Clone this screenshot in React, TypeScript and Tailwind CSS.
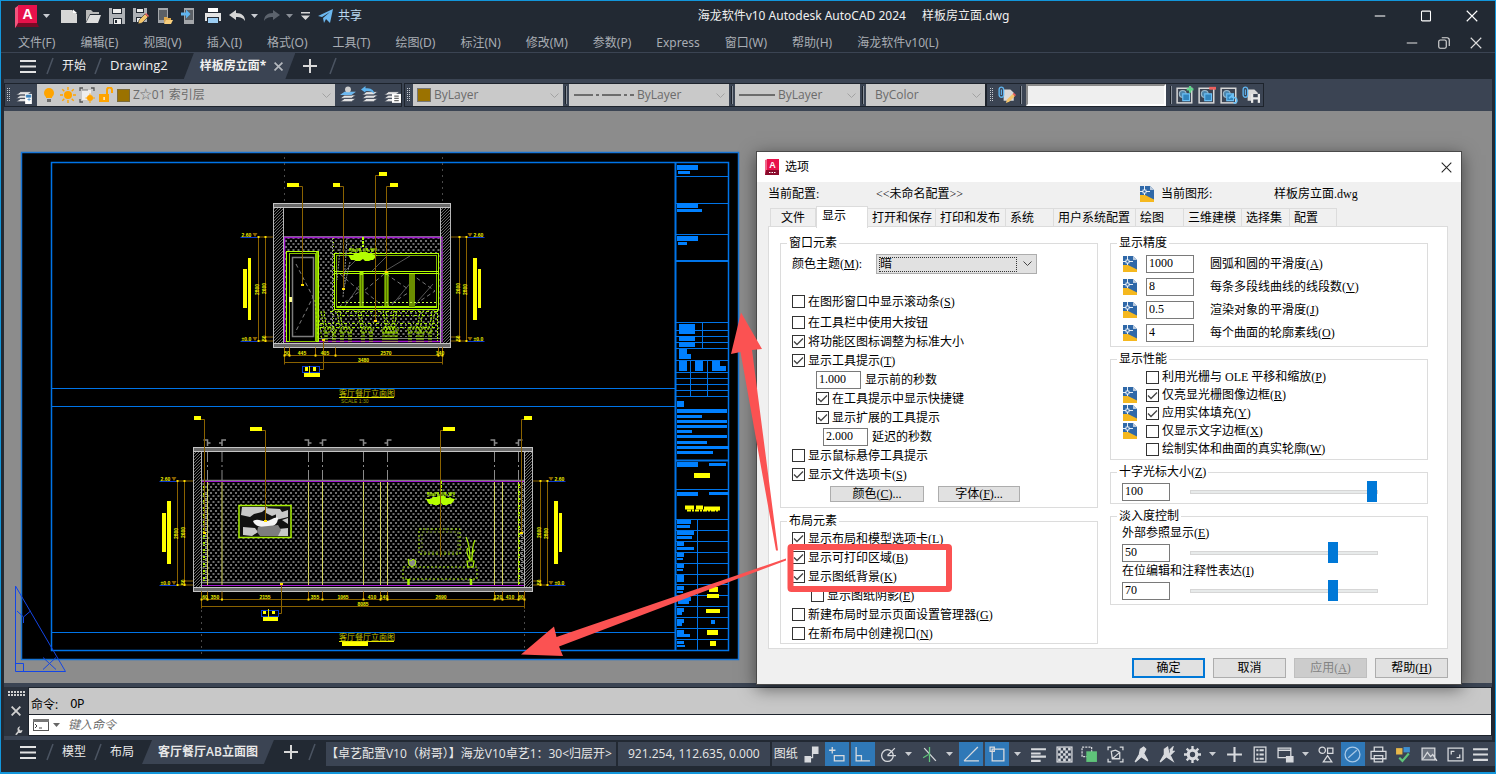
import * as React from 'react';
import { clsx } from 'clsx';

const UI_FONT = "font-['Open_Sans','Noto_Sans_CJK_SC',sans-serif]";
const MENU_FONT = "font-['Noto_Sans','Noto_Sans_CJK_SC',sans-serif]";
const DIALOG_FONT = "font-['Liberation_Serif','Noto_Sans_CJK_SC',serif]";

const MENUS = ['文件(F)', '编辑(E)', '视图(V)', '插入(I)', '格式(O)', '工具(T)', '绘图(D)', '标注(N)', '修改(M)', '参数(P)', 'Express', '窗口(W)', '帮助(H)', '海龙软件v10(L)'];

/* ---------- shared bits ---------- */

function Icon({ size = 16, children, className }: { size?: number; children: React.ReactNode; className?: string }) {
  return (
    <svg width={size} height={size} viewBox="0 0 16 16" fill="none" stroke="none" className={clsx('shrink-0', className)} aria-hidden="true">
      {children}
    </svg>
  );
}

function IconButton({ label, className, children }: { label: string; className?: string; children: React.ReactNode }) {
  return (
    <button type="button" aria-label={label} className={clsx('flex shrink-0 items-center justify-center', className)}>
      {children}
    </button>
  );
}

function Caret({ color = '#c9ccd1' }: { color?: string }) {
  return (
    <svg width="7" height="4" viewBox="0 0 7 4" className="shrink-0" aria-hidden="true">
      <path d="M0 0h7L3.500 4z" fill={color} />
    </svg>
  );
}

function Slash() {
  return (
    <svg width="8" height="18" viewBox="0 0 8 18" className="shrink-0" aria-hidden="true">
      <path d="M7 1L1 17" stroke="#4b5462" strokeWidth="1.500" />
    </svg>
  );
}

function Hamburger() {
  return (
    <svg width="16" height="13" viewBox="0 0 16 13" aria-hidden="true">
      <path d="M0 1h16M0 6.500h16M0 12h16" stroke="#e2e2e2" strokeWidth="2" />
    </svg>
  );
}

function Plus() {
  return (
    <svg width="14" height="14" viewBox="0 0 14 14" aria-hidden="true">
      <path d="M7 0v14M0 7h14" stroke="#d8d8d8" strokeWidth="2" />
    </svg>
  );
}

/* ---------- title bar ---------- */

function AppLogo() {
  return (
    <svg width="24" height="23" viewBox="0 0 24 23" aria-hidden="true">
      <path d="M0 3l4-3v19l-4 4z" fill="#f2557d" />
      <path d="M3 0h19v19H3z" fill="#e8114b" />
      <path d="M3 18h19l2 4H1z" fill="#7a0a26" />
      <text x="12.500" y="14" textAnchor="middle" fontSize="14" fontWeight="700" fill="#fff" className="font-['Liberation_Sans',sans-serif]">A</text>
    </svg>
  );
}

function TitleBar() {
  return (
    <header className="flex h-[30px] items-center justify-between text-xs text-[#f0f0f0]">
      <div className="flex items-center pl-[14px]">
        <IconButton label="应用程序" className="gap-1"><AppLogo /><Caret /></IconButton>
        <div className="ml-[11px] flex items-center gap-2">
          <IconButton label="新建">
            <Icon><path d="M0 2h11l5 4v9H0z" fill="#d6d6d6" /><path d="M12 1.500l4 3.500h-4z" fill="#fff" /></Icon>
          </IconButton>
          <IconButton label="打开">
            <Icon><path d="M1 14V2h5l2 2h6v2H5z" fill="#b9b9b9" /><path d="M5 7h11l-3 8H1z" fill="#dedede" /></Icon>
          </IconButton>
          <IconButton label="保存">
            <Icon><path d="M0 0h16v16H0z" fill="#aeb1b6" /><path d="M3 0h10v6H3zM4 10h9v6H4z" fill="#222933" /><path d="M4 1h8v4H4zM5 11h7v5H5z" fill="#eee" /><path d="M6 12h2v3H6z" fill="#222933" /></Icon>
          </IconButton>
          <IconButton label="另存为">
            <Icon><path d="M0 0h14v14H0z" fill="#aeb1b6" /><path d="M3 0h8v5H3zM3 9h6v5H3z" fill="#222933" /><path d="M4 1h6v3H4zM4 10h4v4H4z" fill="#eee" /><path d="M5 16l1-4 6-6 3 3-6 6z" fill="#f5c56b" stroke="#222933" strokeWidth=".6" /><path d="M12 6l1-1 3 3-1 1z" fill="#f0605d" /></Icon>
          </IconButton>
          <IconButton label="从移动设备打开">
            <Icon><path d="M1 0h10v15H1z" fill="#a4a7ab" /><path d="M2 2h8v10H2z" fill="#5b6066" /><path d="M7 15V9h3l1 1h3v2H9z" fill="#e0a94c" /><path d="M9 12h7l-2 4H7z" fill="#f9cf7d" /></Icon>
          </IconButton>
          <IconButton label="保存到移动设备">
            <Icon><path d="M3 0h10v16H3z" fill="#a4a7ab" /><path d="M4 2h8v10H4z" fill="#5b6066" /><path d="M0 4.500h5V1.500l4.500 4.500L5 10.500V7.500H0z" fill="#5fb4ef" /></Icon>
          </IconButton>
          <IconButton label="打印">
            <Icon><path d="M3 0h10v4H3z" fill="#fff" /><path d="M0 5h16v8H0z" fill="#e3e3e3" /><path d="M2 9h12v7H2z" fill="#222933" /><path d="M3 10h10v5H3z" fill="#9ccdf3" /></Icon>
          </IconButton>
          <IconButton label="放弃" className="gap-[6px]">
            <Icon><path d="M0 7l7-5v3c6 0 9 3 9 8-2-3-4-4-9-4v3z" fill="#d6d6d6" /></Icon><Caret />
          </IconButton>
        </div>
        <div className="ml-[6px] flex items-center gap-2">
          <IconButton label="重做" className="gap-[6px]">
            <Icon><path d="M16 7L9 2v3c-6 0-9 3-9 8 2-3 4-4 9-4v3z" fill="#5c636d" /></Icon><Caret color="#8a8f97" />
          </IconButton>
          <IconButton label="自定义快速访问工具栏">
            <svg width="9" height="8" viewBox="0 0 9 8" aria-hidden="true"><path d="M0 0h9v1.500H0zM0 3.500h9L4.500 8z" fill="#d6d6d6" /></svg>
          </IconButton>
          <button type="button" className="flex items-center gap-1 text-[#b9d8f0]">
            <Icon><path d="M0 8L15 1 12 15 8 11 6 15 5 10 12 4 4 9z" fill="#6cb8f0" /></Icon>
            共享
          </button>
        </div>
      </div>
      <h1 className={clsx('flex gap-4 whitespace-nowrap', MENU_FONT)}><span>海龙软件v10 Autodesk AutoCAD 2024</span><span>样板房立面.dwg</span></h1>
      <div className="flex items-center pl-3">
        <IconButton label="最小化" className="h-[30px] w-[46px]"><Icon size={12}><path d="M1 8h14" stroke="#fff" strokeWidth="1.400" /></Icon></IconButton>
        <IconButton label="最大化" className="h-[30px] w-[46px]"><Icon size={12}><rect x="2" y="1.500" width="12" height="13" rx="1" stroke="#fff" strokeWidth="1.400" /></Icon></IconButton>
        <IconButton label="关闭" className="h-[30px] w-[46px]"><Icon size={12}><path d="M1 1l14 14M15 1L1 15" stroke="#fff" strokeWidth="1.500" /></Icon></IconButton>
      </div>
    </header>
  );
}

function MenuBar() {
  return (
    <nav className="flex h-[22px] items-center justify-between border-b border-[#3b4453] pl-[17px] pr-[3px] pt-[2px] text-xs text-[#a9adb4]">
      <div className={clsx('flex gap-[25px] whitespace-nowrap', MENU_FONT)}>
        {MENUS.map(m => <button key={m} type="button">{m}</button>)}
      </div>
      <div className="flex">
        <IconButton label="最小化图形" className="w-8"><Icon size={12}><path d="M1 8h14" stroke="#ddd" strokeWidth="1.400" /></Icon></IconButton>
        <IconButton label="还原图形" className="w-8"><Icon size={12}><rect x="1" y="4" width="10" height="11" rx="2" stroke="#ddd" strokeWidth="1.500" /><path d="M5 1h7a3 3 0 0 1 3 3v8" stroke="#ddd" strokeWidth="1.500" /></Icon></IconButton>
        <IconButton label="关闭图形" className="w-8"><Icon size={12}><path d="M1 1l14 14M15 1L1 15" stroke="#ddd" strokeWidth="1.500" /></Icon></IconButton>
      </div>
    </nav>
  );
}

function FileTabs() {
  return (
    <div className="flex h-[26px] items-center pl-[19px] text-xs text-[#f0f0f0]">
      <IconButton label="文件菜单"><Hamburger /></IconButton>
      <div className="ml-[10px] flex items-center gap-2">
        <Slash />
        <button type="button">开始</button>
        <Slash />
        <button type="button" className="text-[13px]">Drawing2</button>
      </div>
      <div className="ml-4 flex h-[26px] items-center gap-2 bg-[#3b4453] pl-4 pr-3 [clip-path:polygon(10px_0,100%_0,calc(100%-10px)_100%,0_100%)]">
        <button type="button" className="font-bold">样板房立面*</button>
        <IconButton label="关闭选项卡"><Icon size={9}><path d="M1 1l14 14M15 1L1 15" stroke="#b4b8be" strokeWidth="3" /></Icon></IconButton>
      </div>
      <IconButton label="新图形" className="mx-2"><Plus /></IconButton>
      <span className="ml-1"><Slash /></span>
    </div>
  );
}

/* ---------- toolbars ---------- */

function Grip() {
  return (
    <svg width="4" height="14" viewBox="0 0 4 14" className="shrink-0" aria-hidden="true">
      <path d="M.5 0v14M2.500 0v14" stroke="#c5c9cf" strokeDasharray="1 1" />
    </svg>
  );
}

function Divider() {
  return <span className="h-[18px] w-[2px] shrink-0 border-l border-l-[#1d232c] bg-[#8a919b]" />;
}

function ToolSelect({ label, value, width, children }: { label: string; value: string; width: string; children?: React.ReactNode }) {
  return (
    <label className={clsx('flex h-[22px] items-center gap-[3px] bg-[#c9c9c9] px-1 text-[#6b6b6b]', width)}>
      {children}
      <select aria-label={label} className="min-w-0 flex-1 appearance-none bg-transparent text-xs outline-none">
        <option>{value}</option>
      </select>
      <svg width="9" height="5" viewBox="0 0 9 5" fill="none" className="shrink-0" aria-hidden="true"><path d="M.5.5l4 4 4-4" stroke="#a2a2a2" /></svg>
    </label>
  );
}

function LayerStack({ children }: { children?: React.ReactNode }) {
  return (
    <Icon size={18}>
      <path d="M5 11l-4 3h10l4-3zM5 8l-4 3h10l4-3zM5 5L1 8h10l4-3z" fill="#e3e3e3" stroke="#3b4453" strokeWidth=".7" />
      {children}
    </Icon>
  );
}

function Clip() {
  return <><path d="M5 3h6l3 3v7H5z" fill="#d9d9d9" /><rect x="1" y="1" width="4" height="9" rx="2" stroke="#5fb4ef" strokeWidth="1.200" /><path d="M3 3v5" stroke="#5fb4ef" /></>;
}

function RefEdit() {
  return <><rect x="1" y="2" width="13" height="13" stroke="#d9d9d9" strokeWidth="1.300" /><circle cx="6" cy="7" r="3" fill="#4d86ad" stroke="#9db8c9" /><path d="M6 7h6v6H6z" fill="#3184bd" stroke="#6cc0f5" /></>;
}

function Toolbars() {
  return (
    <div className="mx-[3px] flex h-8 items-center bg-[#3b4453]">
      <div className="flex h-6 items-center gap-1 border border-[#1d232c] pl-[2px]">
        <Grip />
        <IconButton label="图层特性">
          <LayerStack><path d="M9 7h6v9H9z" fill="#fff" /><path d="M10 8h4v2h-4zM11 12h3M12.500 10.500v3" fill="#3c83bd" stroke="#3c83bd" strokeWidth=".6" /></LayerStack>
        </IconButton>
        <ToolSelect label="图层" value="Z☆01 索引层" width="w-[298px]">
          <Icon><circle cx="8" cy="6" r="5" fill="#ffa400" /><path d="M5 10h6v1H5z" fill="#ffa400" /><path d="M6 12h4v3H6z" fill="#6d6d6d" /></Icon>
          <Icon><circle cx="8" cy="8" r="4" fill="#ffa400" /><path d="M8 0v3M8 13v3M0 8h3M13 8h3M2.300 2.300l2 2M11.700 11.700l2 2M13.700 2.300l-2 2M2.300 13.700l2-2" stroke="#ffa400" strokeWidth="1.400" /></Icon>
          <Icon><path d="M1 4V1h3M12 1h3v3M1 12v3h3" stroke="#555" strokeWidth="1.300" /><path d="M3 3h9v10H3z" fill="#eee" /><path d="M3 3h6" stroke="#777" /><circle cx="11" cy="11" r="3" fill="#ffa400" /><path d="M11 6.500v2M11 14v2M6.500 11h2M14 11h2" stroke="#ffa400" /></Icon>
          <Icon><path d="M1 7h10v8H1z" fill="#ffa400" /><path d="M9 7V3a2.500 2.500 0 0 1 5 0v3" stroke="#ffa400" strokeWidth="2" /><path d="M5.500 10h1.200v3H5.500z" fill="#fff" /></Icon>
          <span className="size-[13px] shrink-0 border border-[#7a6a3a] bg-[#9b7200]" />
        </ToolSelect>
        <IconButton label="将对象的图层置为当前"><LayerStack><path d="M5 5L1 8h10l4-3z" fill="#6cb8f0" /><circle cx="8" cy="3" r="2.600" fill="#cfcfcf" /></LayerStack></IconButton>
        <IconButton label="上一个图层"><LayerStack><path d="M0 3l4-3v2c5 0 7 1 8 5-2-2-4-3-8-2.500V6z" fill="#5fb4ef" /></LayerStack></IconButton>
        <IconButton label="图层状态管理器"><LayerStack><path d="M8 7h8v8H8z" fill="#fff" /><path d="M10 9h4M10 11h4M10 13h4" stroke="#666" /></LayerStack></IconButton>
      </div>
      <div className="ml-[2px] flex h-6 items-center gap-[2px] border border-[#1d232c] pl-[2px]">
        <Grip />
        <ToolSelect label="对象颜色" value="ByLayer" width="w-[150px]"><span className="size-[14px] shrink-0 border border-[#777] bg-[#9b7200]" /></ToolSelect>
        <Divider />
        <ToolSelect label="线型" value="ByLayer" width="w-[160px]">
          <svg width="61" height="2" className="shrink-0" aria-hidden="true"><path d="M1 1h60" stroke="#111" strokeDasharray="19 3 3 3" /></svg>
        </ToolSelect>
        <Divider />
        <ToolSelect label="线宽" value="ByLayer" width="w-[125px]">
          <svg width="36" height="2" className="shrink-0" aria-hidden="true"><path d="M0 1h36" stroke="#111" /></svg>
        </ToolSelect>
        <Divider />
        <ToolSelect label="打印样式" value="ByColor" width="w-[119px]"><span className="w-[2px]" /></ToolSelect>
      </div>
      <div className="flex h-6 items-center gap-1 border border-[#1d232c] px-[3px]">
        <Grip />
        <IconButton label="在位编辑参照"><Icon size={18}><Clip /><path d="M7 15l1-3 5-5 2 2-5 5z" fill="#f5c56b" /><path d="M13 7l1-1 2 2-1 1z" fill="#f0605d" /></Icon></IconButton>
        <Divider />
        <input aria-label="参照名" className="h-[22px] w-[140px] border-2 border-b-white border-l-[#8a8a8a] border-r-white border-t-[#8a8a8a] bg-[#efefef] px-1 text-xs" />
        <Divider />
        <IconButton label="添加到工作集"><Icon size={18}><RefEdit /><path d="M12.500 0v6M9.500 3h6" stroke="#5fd38a" strokeWidth="2" /></Icon></IconButton>
        <IconButton label="从工作集删除"><Icon size={18}><RefEdit /><path d="M10 2h6" stroke="#f0605d" strokeWidth="2.500" /></Icon></IconButton>
        <IconButton label="关闭参照"><Icon size={18}><RefEdit /><path d="M8 11l3-3v2c3 0 4 1 4 3s-1 2-3 2" stroke="#6cc0f5" strokeWidth="1.500" /></Icon></IconButton>
        <IconButton label="保存参照编辑"><Icon size={18}><Clip /><path d="M8 7h8v8H8z" fill="#e8e8e8" /><path d="M10 7h4v3h-4zM10 12h4v3h-4z" fill="#3b4453" /></Icon></IconButton>
      </div>
    </div>
  );
}

/* ---------- drawing ---------- */

type Box = [number, number, number, number];

const SHEET_LINES = [176, 203, 234, 322, 330, 336, 342, 348, 360, 372, 378, 384, 390, 396, 489, 519, 530, 541, 552, 563, 574, 584, 595, 606, 617, 628, 639];

const SHEET_BLOCKS: Box[] = [
  [677, 165, 21, 5], [678, 171, 12, 3], [677, 203, 21, 5], [677, 209, 25, 3], [677, 236, 21, 5], [678, 242, 9, 3],
  [679, 324, 16, 10], [679, 336, 16, 5], [679, 342, 16, 5], [679, 349, 8, 10], [687, 354, 4, 5],
  [679, 361, 8, 10], [695, 361, 8, 10], [712, 361, 8, 10], [720, 366, 6, 5], [677, 401, 7, 6],
  [677, 409, 50, 4], [677, 415, 25, 3], [677, 420, 50, 3], [677, 425, 50, 3], [677, 430, 15, 3], [677, 435, 50, 3], [677, 441, 30, 3], [677, 446, 52, 3], [677, 451, 36, 3],
  [677, 462, 21, 5], [709, 463, 17, 3], [677, 492, 21, 4], [709, 492, 20, 3],
  [677, 520, 14, 4], [677, 525, 13, 3], [677, 531, 17, 4], [677, 536, 15, 3], [677, 542, 7, 4], [677, 547, 17, 3],
  [677, 553, 7, 4], [677, 558, 6, 2], [677, 564, 7, 4], [677, 569, 6, 2], [677, 575, 7, 7], [677, 586, 7, 4], [677, 591, 6, 2],
  [677, 597, 14, 4], [678, 601, 11, 3], [677, 608, 7, 4], [677, 612, 5, 3], [677, 619, 7, 4], [677, 623, 5, 3],
  [677, 630, 7, 4], [677, 634, 13, 3], [677, 641, 7, 3], [677, 645, 8, 2], [711, 620, 4, 4],
];

const YELLOW_BLOCKS: Box[] = [
  [694, 473, 16, 5], [709, 587, 9, 5], [707, 594, 12, 4], [706, 609, 14, 4], [707, 630, 11, 5], [710, 641, 6, 5],
  [287, 183, 12, 4], [333, 183, 7, 4], [379, 172, 8, 4], [390, 183, 8, 4],
  [243, 269, 4, 39], [248, 258, 3, 62], [473, 258, 4, 62], [478, 269, 3, 39],
  [194, 416, 7, 4], [250, 427, 12, 4], [443, 427, 12, 4], [524, 416, 8, 4],
  [162, 513, 4, 39], [167, 501, 4, 63], [554, 501, 4, 63], [559, 513, 3, 39],
  [304, 373, 16, 4], [305, 367, 3, 4], [313, 367, 3, 4], [263, 617, 15, 4], [263, 611, 3, 3], [272, 611, 3, 3], [342, 642, 26, 4],
];

function Shell({ x, y, right, bottom, wall }: { x: number; y: number; right: number; bottom: number; wall: number }) {
  const w = right - x;
  return (
    <g>
      <g fill="url(#hatch)" stroke="#b5b5b5">
        <rect x={x + 0.5} y={y + 4} width={wall} height={bottom - y - 8} />
        <rect x={right - wall - 0.5} y={y + 4} width={wall} height={bottom - y - 8} />
      </g>
      <g fill="#6a6a6a" stroke="#c4c4c4">
        <rect x={x + 0.5} y={y + 0.5} width={w - 1} height="4" />
        <rect x={x + 0.5} y={bottom - 4.5} width={w - 1} height="4" />
      </g>
    </g>
  );
}

function SideDims({ inner, outer, edge, top, bottom, mirrored }: { inner: number; outer: number; edge: number; top: number; bottom: number; mirrored?: boolean }) {
  const mid = (top + bottom) / 2;
  const mark = mirrored ? outer + 1 : outer - 6;
  const line = mirrored ? outer + 1 : outer - 18;
  const text = mirrored ? outer + 7 : outer - 17;
  return (
    <g>
      <path d={`M${inner} ${top}V${bottom}M${outer} ${top}V${bottom}M${edge} ${top}H${outer}M${edge} ${bottom}H${outer}M${edge} ${bottom - 4}H${inner}`} stroke="#8a6200" fill="none" />
      <path d={`M${line} ${top + 0.5}h17M${line} ${bottom + 0.5}h17`} stroke="#0a3bd0" />
      <path d={`M${mark} ${top - 4}h5l-2.500 4zM${mark} ${bottom - 4}h5l-2.500 4z`} fill="#8a6200" />
      <g fill="#f0f000" fontSize="5" fontWeight="700">
        <text x={text} y={top}>2.60</text>
        <text x={text} y={bottom}>±0.0</text>
        <text transform={`translate(${inner} ${mid + 5}) rotate(-90)`}>2600</text>
        <text transform={`translate(${outer} ${mid + 6}) rotate(-90)`}>2800</text>
        <text transform={`translate(${inner} ${bottom}) rotate(-90)`}>50</text>
      </g>
      <g fill="#ffe000">
        {[inner, outer].map(x => <path key={x} d={`M${x - 1} ${top - 1}h2v2h-2zM${x - 1} ${bottom - 1}h2v2h-2z`} />)}
      </g>
    </g>
  );
}

function BottomDims({ y, ticks, labels, total }: { y: number; ticks: number[]; labels: [number, string][]; total: string }) {
  const first = ticks[0];
  const last = ticks[ticks.length - 1];
  return (
    <g>
      <path d={`M${first} ${y}H${last}M${first} ${y + 7}H${last}M${first} ${y - 8}V${y + 9}M${last} ${y - 8}V${y + 9}`} stroke="#8a6200" />
      {ticks.map(t => <path key={t} d={`M${t} ${y - 8}V${y + 1}`} stroke="#a06a00" />)}
      {ticks.map(t => <rect key={t} x={t - 1} y={y - 1} width="2" height="2" fill="#ffe000" />)}
      <g fill="#f0f000" fontSize="5" fontWeight="700" textAnchor="middle">
        {labels.map(([x, s]) => <text key={x} x={x} y={y - 1}>{s}</text>)}
        <text x={(first + last) / 2} y={y + 6}>{total}</text>
      </g>
    </g>
  );
}

function Chandelier({ x, y }: { x: number; y: number }) {
  return (
    <g transform={`translate(${x} ${y})`} fill="#b4ff00" stroke="#b4ff00">
      <path d="M0-10V0" strokeWidth="2" strokeDasharray="3 1" />
      <path d="M-12 4h24M-13 1v5M-8 2v6M-3 1v6M4 1v7M9 2v5M13 1v5" strokeWidth="1.200" strokeDasharray="3 1" fill="none" />
      <path d="M-14 2h28" strokeDasharray="5 2" />
      <path d="M-15 8h5l2-2h4l2-1h5l2 2h4l5 1-2 3-2 2H8l-2 1H2l-2-2-3 2h-4l-2-1h-3z" stroke="none" />
    </g>
  );
}

function Chair({ x, flip }: { x: number; flip?: boolean }) {
  return (
    <g transform={`translate(${x} 311)${flip ? ' scale(-1 1)' : ''}`} stroke="#a8f000" fill="none" strokeDasharray="2 1">
      <path d="M0 0c1 6 2 12 3 17M3 0c1 6 1 12 3 16h8M3 18h12v3H3zM4 21v10M6 21v10M12 21v10M14 21v10" />
    </g>
  );
}

function UpperElevation() {
  return (
    <g>
      <path d="M284.500 157V203M442.500 157V203" stroke="#4a4a4a" strokeDasharray="2 4" />
      <rect x="285" y="238" width="157" height="99" fill="url(#paper)" />
      <path d="M284 236.500H442M318 338.500H442" stroke="#7d7d7d" />
      <path d="M284 237.500H442V341.500H284.500V237" stroke="#a216d0" fill="none" strokeWidth="1.500" />
      <Shell x={273} y={203} right={451} bottom={348} wall={10} />

      {/* door */}
      <rect x="286.500" y="251.500" width="32" height="90" fill="#000" stroke="#b4ff00" />
      <rect x="289.500" y="253.500" width="26" height="88" stroke="#8ac400" fill="none" />
      <path d="M317 252V341" stroke="#8ac400" strokeWidth="2" />
      <rect x="292.500" y="257.500" width="21" height="79" fill="#000" stroke="#7d7d7d" strokeWidth="1.500" />
      <path d="M296 264L313 297L295 333" stroke="#7d7d7d" strokeDasharray="4 3" fill="none" />
      <rect x="289" y="297" width="3" height="5" fill="#ffff90" />

      {/* window */}
      <rect x="334.500" y="253.500" width="104" height="56" fill="#000" stroke="#b4ff00" />
      <rect x="336.500" y="255.500" width="100" height="52" stroke="#82b800" fill="none" />
      <path d="M345 271l15-15M372 271l15-15M385 271l25-15M345 306l14-20M392 305l20-24M418 301l15-17" stroke="#555" fill="none" />
      <path d="M340 274l20 17-20 15M386 274l25 17-25 16M411 274l24 17-24 16M384 274l-20 17 20 16" stroke="#777" strokeDasharray="4 3" fill="none" />
      <path d="M335 271.500H438M335 273.500H438" stroke="#b4ff00" />
      <path d="M361.500 272V308M386.500 272V308" stroke="#a8f000" strokeWidth="4" />
      <path d="M361.500 275V306M386.500 275V306" stroke="#5a7800" strokeWidth="2" />
      <path d="M337 307H437" stroke="#a8f000" strokeWidth="2" />
      <rect x="409" y="274" width="6" height="33" fill="#6b8e00" />
      <path d="M338 302.500H438" stroke="#c8ff40" strokeDasharray="2 2" />
      <Chandelier x={363} y={247} />

      {/* curtain and table group */}
      <path d="M332.500 238V340M341 240l-4 40M350 262l-6 26M347 238l-4 60" stroke="#8a8a8a" strokeDasharray="2 1" fill="none" />
      <path d="M333.500 238V340M353 245v14" stroke="#a8f000" strokeDasharray="1 3" />
      <path d="M318 312l4 28M315 300l3 40" stroke="#a8f000" strokeDasharray="2 2" />
      <path d="M320 323.500H440M320 327.500H436M330 311.500H438M342 315.500H432" stroke="#a8f000" strokeDasharray="3 2 1 2" />
      <Chair x={321} /><Chair x={337} /><Chair x={358} /><Chair x={383} /><Chair x={397} flip /><Chair x={423} flip /><Chair x={435} flip />
      <path d="M437.500 310V341" stroke="#a8f000" strokeDasharray="2 1" />

      {/* leaders */}
      <path d="M299 186.500H302.500V285M340 186.500H343.500V289M379 175.500H375.500V321M390 186.500H386.500V272M320 369.500H323.500V340" stroke="#8a6200" fill="none" />
      <path d="M301 284h3v2h-3zM342 288h3v2h-3zM374 320h3v2h-3zM385 271h3v2h-3zM322 339h3v2h-3z" fill="#ffe000" />
      <rect x="302.500" y="366.500" width="17" height="6" stroke="#0a3bd0" fill="none" />
      <path d="M309.500 366v8" stroke="#e8e800" />

      <SideDims inner={265.5} outer={258.5} edge={273} top={237} bottom={341} />
      <SideDims inner={459.5} outer={466.5} edge={451} top={237} bottom={341} mirrored />
      <BottomDims y={355.5} ticks={[284.5, 289.5, 315.5, 335.5, 438.5, 442.5]} labels={[[287, '50'], [302, '445'], [325, '405'], [386, '2570'], [440, '140']]} total="3480" />
      <text x="339" y="396" fontSize="8" fill="#c0c000">客厅餐厅立面图</text>
      <path d="M339 397.500H394" stroke="#e8e800" />
      <text x="341" y="403" fontSize="5" fill="#a0a000">SCALE 1:30</text>
    </g>
  );
}

const PILASTERS = [207.5, 222, 308.5, 322.5, 363.5, 380.5, 387.5, 494.5, 502.5, 518.5];
const AXES = [207.5, 222, 308.5, 322.5, 363.5, 387.5, 494.5, 518.5];

function LowerElevation() {
  return (
    <g>
      <path d="M201.500 592V657M524.500 592V657" stroke="#4a4a4a" strokeDasharray="2 4" />
      <rect x="202" y="482" width="322" height="100" fill="url(#paper)" />
      <path d="M201 480.500H524M201 582.500H524" stroke="#7d7d7d" strokeWidth="1.500" />
      <path d="M201 481.500H524M524 585.500H201.500V481" stroke="#a216d0" fill="none" />
      <Shell x={193} y={447} right={533} bottom={592} wall={8} />
      {AXES.map((x, i) => (
        <g key={x} stroke="#8a8a8a" fill="none">
          <path d={`M${x} 452V481`} strokeDasharray="10 3 2 3" />
          <path d={i % 2 ? `M${x} 446v-6h4M${x - 3} 443h3` : `M${x} 446v-6h-4M${x} 443h3`} strokeWidth="1.500" />
        </g>
      ))}
      {PILASTERS.map(x => <path key={x} d={`M${x} 482V585`} stroke="#d2d25a" />)}
      <path d="M204 486V584M519 484V584" stroke="#a8f000" strokeWidth="2" strokeDasharray="2 1 1 3" />
      <path d="M206 492V584M522 482V584" stroke="#8a8a8a" strokeWidth="2" strokeDasharray="1 1" />

      {/* painting */}
      <rect x="239" y="505.500" width="52" height="32" fill="#111" stroke="#a8f000" strokeWidth="1.500" />
      <path d="M242 507h26l-6 5-8 2-4 3-9-2zM264 508l16 1 2 3-10 4-6-3zM276 514l12-4v7l-12 3zM243 527l12 1 3 4-6 4-9-1zM278 529l10-1v8h-12zM282 520l6-2v6z" fill="#c8c8c8" />
      <path d="M253 521c4-3 8 0 13 0s9-5 12-3c0 6-5 9-9 9-6 1-14 0-16-6z" fill="#f4f4f4" />
      <path d="M258 527l20-2 3 5-3 6h-18l-3-4z" fill="#7d7d7d" />

      <Chandelier x={441} y={491} />
      {/* cabinet, plant, vase */}
      <g stroke="#a8f000" fill="none">
        <rect x="419" y="529" width="41" height="25" strokeDasharray="2 2" />
        <rect x="422" y="532" width="36" height="20" strokeDasharray="2 2" stroke="#7a9a20" />
        <rect x="403" y="567" width="74" height="12" strokeDasharray="2 2" />
        <path d="M408.500 579v6M471 579v6" strokeWidth="2.500" />
        <path d="M466 537c3 6 4 14 4 24M475 540c-2 4-3 10-3 20M468 548c-3 3 0 8 2 12M475 550c-4 2-2 8-4 10M467 561h7l-1 6h-5z" strokeWidth="1.200" />
        <path d="M408 559l3 2 2-2 3 2-1 4-3 2-3-2z" fill="#8a8a8a" />
      </g>

      <path d="M201 419.500H204.500V533M262 430.500H265.500V520M443 430.500H440.500V557M524 419.500H521.500V533M279 613.500H281.500V584" stroke="#8a6200" fill="none" />
      <path d="M203 532h3v2h-3zM264 520h3v2h-3zM280 583h3v2h-3zM520 532h3v2h-3z" fill="#ffe000" />
      <rect x="261.500" y="610.500" width="17" height="6" stroke="#0a3bd0" fill="none" />
      <path d="M268.500 609v8" stroke="#e8e800" />

      <SideDims inner={184.5} outer={177.5} edge={193} top={481} bottom={585} />
      <SideDims inner={540.5} outer={547.5} edge={533} top={481} bottom={585} mirrored />
      <BottomDims
        y={599.5}
        ticks={[201.5, 207.5, 222, 308.5, 322.5, 363.5, 380.5, 387.5, 494.5, 502.5, 518.5, 524.5]}
        labels={[[205, '60'], [215, '350'], [265, '2155'], [315, '355'], [343, '1065'], [372, '410'], [384, '140'], [441, '2690'], [498, '120'], [510, '410'], [521, '60']]}
        total="8085"
      />
      <text x="339" y="640" fontSize="8" fill="#c0c000">客厅餐厅立面图</text>
      <path d="M339 641.500H394" stroke="#e8e800" />
    </g>
  );
}

function LayoutSheet() {
  return (
    <svg width="756" height="572" viewBox="4 111 756 572" className="block font-['Liberation_Sans','Noto_Sans_CJK_SC',sans-serif]" role="img" aria-label="客厅餐厅立面图">
      <defs>
        <pattern id="paper" width="5" height="6" patternUnits="userSpaceOnUse">
          <path d="M0 0h2v2H0zM2.500 3h2v2h-2z" fill="#707070" />
        </pattern>
        <pattern id="hatch" width="3" height="3" patternUnits="userSpaceOnUse">
          <path d="M0 3L3 0M-1 1L1-1M2 4L4 2" stroke="#6a6a6a" />
        </pattern>
      </defs>
      <rect x="21.500" y="152.500" width="717" height="507" fill="#000" stroke="#1775d6" strokeWidth="1.500" />
      <g stroke="#0074e8" fill="none">
        <rect x="51.500" y="162.500" width="677" height="488" strokeWidth="1.500" />
        <path d="M51 388.500H675M51 406.500H675M51 632.500H675M697.500 519V650M702.500 322V348M690.500 360V396M707.500 360V396" />
        <path d="M675.500 162V650M675 261H729M675 460.500H729" strokeWidth="2" />
        {SHEET_LINES.map(y => <path key={y} d={`M675 ${y + 0.5}H729`} />)}
      </g>
      <UpperElevation />
      <LowerElevation />
      <g fill="#0080ff">{SHEET_BLOCKS.map(([x, y, w, h]) => <rect key={`${x}-${y}`} x={x} y={y} width={w} height={h} />)}</g>
      <g fill="#ffff00">{YELLOW_BLOCKS.map(([x, y, w, h]) => <rect key={`${x}-${y}`} x={x} y={y} width={w} height={h} />)}</g>
      <path d="M685 507.500h9M696 507.500h7M704 508.500h16" stroke="#ffff00" strokeWidth="4" />
      <path d="M687 510.500h32" stroke="#ffff00" strokeWidth="2" strokeDasharray="4 1 2 1" />
      {/* UCS icon */}
      <g stroke="#1446e6" fill="none">
        <path d="M15.500 586L65.500 671.500H15.500zM16 663.500h7.500v8M17 611l6.500 6 7-6M23.500 617v6M43 657.500l13 12M56 657.500l-13 12" />
      </g>
    </svg>
  );
}

/* ---------- options dialog ---------- */

function DwgIcon() {
  return (
    <svg width="14" height="16" viewBox="0 0 14 16" className="shrink-0" aria-hidden="true">
      <path d="M0 0h10l4 4v10H0z" fill="#2f68a8" />
      <path d="M10 0l4 4h-4z" fill="#b9c9dc" />
      <path d="M0 9h5l9 4.500V16H0z" fill="#f5b81f" />
      <path d="M4.500 0v9M0 5.500h10" stroke="#e6eef7" />
      <rect x="3" y="4" width="3" height="3" fill="#2f68a8" stroke="#fff" strokeWidth=".8" />
    </svg>
  );
}

/* Splits "名称(K)" so that the access key is underlined. */
function KeyText({ text }: { text: string }) {
  const m = /^(.*\()([A-Z])(\).*)$/.exec(text);
  if (!m) return <>{text}</>;
  return <>{m[1]}<u className="underline-offset-1">{m[2]}</u>{m[3]}</>;
}

function Check({ text, checked, className }: { text: string; checked?: boolean; className?: string }) {
  return (
    <label className={clsx('flex items-center gap-[3px]', className)}>
      <span className="relative size-[13px] shrink-0">
        <input type="checkbox" defaultChecked={checked} className="peer block size-[13px] appearance-none border border-[#333] bg-white" />
        <svg viewBox="0 0 13 13" fill="none" className="pointer-events-none absolute inset-0 hidden peer-checked:block" aria-hidden="true">
          <path d="M2 6.500L5 9.500l6-6" stroke="#444" strokeWidth="1.300" />
        </svg>
      </span>
      <span className="whitespace-nowrap"><KeyText text={text} /></span>
    </label>
  );
}

function Field({ value, label, className, hidden, narrow }: { value: string; label: string; className?: string; hidden?: boolean; narrow?: boolean }) {
  return (
    <label className={clsx('flex items-center', className)}>
      <input
        defaultValue={value}
        aria-label={label}
        className={clsx('h-[18px] border border-[#7a7a7a] bg-white px-[2px]', narrow ? 'w-[45px]' : 'w-12')}
      />
      {!hidden && <span className={narrow ? 'ml-1' : 'ml-4'}><KeyText text={label} /></span>}
    </label>
  );
}

function Group({ title, className, children }: { title: string; className?: string; children: React.ReactNode }) {
  return (
    <fieldset className={clsx('min-w-0 border border-[#dcdcdc]', className)}>
      <legend className="ml-[6px] px-[2px] leading-4"><KeyText text={title} /></legend>
      {children}
    </fieldset>
  );
}

function SliderRow({ value, position, label }: { value: string; position: number; label: string }) {
  return (
    <div className="flex h-[19px] items-center pl-[11px]">
      <Field value={value} label={label} hidden />
      <input
        type="range"
        aria-label={label}
        defaultValue={position}
        className="ml-5 h-[21px] w-[188px] appearance-none bg-transparent [&::-webkit-slider-runnable-track]:h-1 [&::-webkit-slider-runnable-track]:border [&::-webkit-slider-runnable-track]:border-[#d6d6d6] [&::-webkit-slider-runnable-track]:bg-[#e7eaea] [&::-webkit-slider-thumb]:-mt-[10px] [&::-webkit-slider-thumb]:h-[21px] [&::-webkit-slider-thumb]:w-[10px] [&::-webkit-slider-thumb]:appearance-none [&::-webkit-slider-thumb]:bg-[#0078d7]"
      />
    </div>
  );
}

function PushButton({ text, className, disabled }: { text: string; className?: string; disabled?: boolean }) {
  return (
    <button
      type="button"
      disabled={disabled}
      className={clsx('flex items-center justify-center border', disabled ? 'border-[#bfbfbf] bg-[#cccccc] text-[#838383]' : 'border-[#adadad] bg-[#e1e1e1]', className)}
    >
      <span><KeyText text={text} /></span>
    </button>
  );
}

const DIALOG_TABS: [string, string][] = [
  ['文件', 'w-[46px] pl-[10px]'], ['显示', ''], ['打开和保存', 'w-[68px]'], ['打印和发布', 'w-[70px]'], ['系统', 'w-12'],
  ['用户系统配置', 'w-[82px]'], ['绘图', 'w-12'], ['三维建模', 'w-[58px]'], ['选择集', 'w-12'], ['配置', 'w-[47px]'],
];

const CHECK_ROW = 'h-[19px] pl-[11px]';

function LeftColumn() {
  return (
    <div className="flex w-[318px] flex-col gap-[5px]">
      <Group title="窗口元素" className="pb-1">
        <label className="flex h-[26px] items-center pl-[11px]">
          <span className="w-[84px]"><KeyText text="颜色主题(M):" /></span>
          <span className="relative flex h-5 w-[161px] items-center border border-[#adadad] bg-[#e1e1e1]">
            <select className="ml-[2px] h-[15px] w-[138px] appearance-none border border-dotted border-[#333] bg-transparent leading-3 outline-none">
              <option>暗</option>
            </select>
            <svg width="9" height="6" viewBox="0 0 9 6" fill="none" className="ml-auto mr-1" aria-hidden="true"><path d="M.5.5l4 4 4-4" stroke="#444" /></svg>
          </span>
        </label>
        <Check text="在图形窗口中显示滚动条(S)" className={clsx(CHECK_ROW, 'mt-[15px] mb-[2px]')} />
        <Check text="在工具栏中使用大按钮" className={CHECK_ROW} />
        <Check text="将功能区图标调整为标准大小" checked className={CHECK_ROW} />
        <Check text="显示工具提示(T)" checked className={CHECK_ROW} />
        <Field value="1.000" label="显示前的秒数" narrow className="h-[19px] pl-[35px]" />
        <Check text="在工具提示中显示快捷键" checked className="h-[19px] pl-[35px]" />
        <Check text="显示扩展的工具提示" checked className="h-[19px] pl-[35px]" />
        <Field value="2.000" label="延迟的秒数" narrow className="h-[19px] pl-[42px]" />
        <Check text="显示鼠标悬停工具提示" className={CHECK_ROW} />
        <Check text="显示文件选项卡(S)" checked className={CHECK_ROW} />
        <div className="flex h-[19px] items-center gap-[14px] pl-[49px]">
          <PushButton text="颜色(C)..." className="h-4 w-[94px]" />
          <PushButton text="字体(F)..." className="h-4 w-[82px]" />
        </div>
      </Group>
      <Group title="布局元素">
        <Check text="显示布局和模型选项卡(L)" checked className={CHECK_ROW} />
        <Check text="显示可打印区域(B)" checked className={CHECK_ROW} />
        <Check text="显示图纸背景(K)" checked className={CHECK_ROW} />
        <Check text="显示图纸阴影(E)" className="h-[19px] pl-[30px]" />
        <Check text="新建布局时显示页面设置管理器(G)" className={CHECK_ROW} />
        <Check text="在新布局中创建视口(N)" className={CHECK_ROW} />
      </Group>
    </div>
  );
}

const PRECISION: [string, string][] = [
  ['1000', '圆弧和圆的平滑度(A)'], ['8', '每条多段线曲线的线段数(V)'], ['0.5', '渲染对象的平滑度(J)'], ['4', '每个曲面的轮廓素线(O)'],
];

const PERFORMANCE: { text: string; saved: boolean; checked?: boolean }[] = [
  { text: '利用光栅与 OLE 平移和缩放(P)', saved: false },
  { text: '仅亮显光栅图像边框(R)', saved: true, checked: true },
  { text: '应用实体填充(Y)', saved: true, checked: true },
  { text: '仅显示文字边框(X)', saved: true },
  { text: '绘制实体和曲面的真实轮廓(W)', saved: false },
];

function RightColumn() {
  return (
    <div className="flex w-[318px] flex-col gap-1">
      <Group title="显示精度" className="pt-[1px] pb-[2px]">
        {PRECISION.map(([value, label]) => (
          <div key={label} className="flex h-[23px] items-center gap-[9px] pl-3">
            <DwgIcon />
            <Field value={value} label={label} />
          </div>
        ))}
      </Group>
      <Group title="显示性能" className="pt-[1px] pb-[1px]">
        {PERFORMANCE.map(p => (
          <div key={p.text} className="flex h-[18px] items-center gap-[9px] pl-3">
            <span className="w-[14px]">{p.saved && <DwgIcon />}</span>
            <Check text={p.text} checked={p.checked} />
          </div>
        ))}
      </Group>
      <Group title="十字光标大小(Z)" className="pt-[2px] pb-[2px]">
        <SliderRow value="100" position={100} label="十字光标大小" />
      </Group>
      <Group title="淡入度控制" className="pb-1">
        <div className="h-[19px] pl-[11px] leading-[19px]"><KeyText text="外部参照显示(E)" /></div>
        <SliderRow value="50" position={78} label="外部参照显示" />
        <div className="h-[19px] pl-[11px] leading-[19px]"><KeyText text="在位编辑和注释性表达(I)" /></div>
        <SliderRow value="70" position={78} label="在位编辑和注释性表达" />
      </Group>
    </div>
  );
}

function OptionsDialog() {
  return (
    <section
      role="dialog"
      aria-label="选项"
      className={clsx('absolute left-[752px] top-[40px] flex w-[706px] flex-col border border-[#4a4a4a] bg-[#f0f0f0] text-xs leading-4 text-black shadow-[0_4px_16px_rgba(0,0,0,0.5)]', DIALOG_FONT)}
    >
      <div className="flex h-[30px] items-center gap-[6px] bg-white pl-2 pr-[9px]">
        <svg width="14" height="16" viewBox="0 0 14 16" aria-hidden="true">
          <path d="M0 1l3-1v15l-3 1z" fill="#f0668a" /><path d="M2 0h12v12H2z" fill="#e8114b" /><path d="M1 11h13v5H0z" fill="#8a0a2c" />
          <text x="7.500" y="9" textAnchor="middle" fontSize="9" fontWeight="700" fill="#fff" className="font-['Liberation_Sans',sans-serif]">A</text>
          <path d="M4 13.500h7" stroke="#fff" strokeDasharray="1.500 1" />
        </svg>
        <h2 className={UI_FONT}>选项</h2>
        <IconButton label="关闭" className="ml-auto"><Icon size={11}><path d="M1 1l14 14M15 1L1 15" stroke="#222" strokeWidth="1.500" /></Icon></IconButton>
      </div>
      <div className="flex h-6 items-center pl-[11px]">
        <span className="w-[108px]">当前配置:</span>
        <span className="w-[264px]">&lt;&lt;未命名配置&gt;&gt;</span>
        <DwgIcon />
        <span className="ml-[7px] w-[113px]">当前图形:</span>
        <span>样板房立面.dwg</span>
      </div>
      <div className="pl-[11px] pr-[13px]">
        <div role="tablist" className="flex h-5 items-end pl-[2px]">
          {DIALOG_TABS.map(([name, width]) =>
            name === '显示' ? (
              <button key={name} type="button" role="tab" aria-selected="true" className="relative -mb-[2px] h-[22px] w-[52px] border border-b-0 border-[#dcdcdc] bg-white pb-1 pl-[5px] text-left">{name}</button>
            ) : (
              <button key={name} type="button" role="tab" className={clsx('h-[18px] whitespace-nowrap border-r border-t border-[#dcdcdc] pl-1 text-left first:border-l', width)}>{name}</button>
            )
          )}
        </div>
        <div className="flex h-[423px] gap-3 border border-[#dcdcdc] bg-white pl-[11px] pt-2">
          <LeftColumn />
          <RightColumn />
        </div>
      </div>
      <div className="flex gap-2 self-end pb-[6px] pr-[13px] pt-[9px]">
        <button type="button" className="h-5 w-[73px] border-2 border-[#0078d7] bg-[#e1e1e1] leading-none">确定</button>
        <PushButton text="取消" className="h-5 w-[73px]" />
        <PushButton text="应用(A)" disabled className="h-5 w-[73px]" />
        <PushButton text="帮助(H)" className="h-5 w-[73px]" />
      </div>
    </section>
  );
}

function Callout() {
  return (
    <svg width="960" height="572" viewBox="4 111 960 572" className="pointer-events-none absolute left-0 top-0" aria-hidden="true">
      <rect x="790.500" y="547" width="158.500" height="42" rx="1" fill="none" stroke="#fb5252" strokeWidth="6" />
      <path d="M741 312.500L762 349l-10 1L778 550.500h-2L740.500 352l-9.500 2z" fill="#fb5252" />
      <path d="M521 654.500L554 626.500l2.500 10.500L786 558.500v2L559 646.500l4 9.500z" fill="#fb5252" />
    </svg>
  );
}

/* ---------- command line and status bar ---------- */

function CommandLine() {
  return (
    <div className="mx-[3px] flex border-y-4 border-[#3b4453] text-xs">
      <div className="flex w-6 flex-col items-center gap-[10px] bg-[#2b323d] pt-1">
        <svg width="17" height="5" viewBox="0 0 17 5" aria-hidden="true"><path d="M0 1h17M0 4h17" stroke="#d0d0d0" strokeWidth="2" strokeDasharray="2 1" /></svg>
        <IconButton label="关闭命令行"><Icon size={10}><path d="M1 1l14 14M15 1L1 15" stroke="#d0d0d0" strokeWidth="3" /></Icon></IconButton>
        <IconButton label="自定义" className="ml-1"><Icon size={9}><path d="M2 15L7 9c-2-4 0-8 4-8L9 5l2 3 4-1c0 4-3 7-7 5l-3 4z" fill="#d0d0d0" /></Icon></IconButton>
      </div>
      <div className="flex-1 border border-[#1d232c] bg-white">
        <div className="flex h-[27px] items-end border-b border-[#1d232c] bg-[#c8c8c8] pb-[1px] pl-[2px] leading-4 text-black">命令: <span className="ml-3 font-['Liberation_Mono',monospace]">OP</span></div>
        <label className="flex h-5 items-center gap-1 pl-1">
          <Icon><rect x=".5" y="2.500" width="15" height="11" fill="#fff" stroke="#555" /><path d="M0 2h16v3H0z" fill="#777" /><path d="M2 7l2 2-2 2M6 11h3" stroke="#444" /></Icon>
          <Caret color="#666" />
          <input placeholder="键入命令" aria-label="键入命令" className="ml-1 flex-1 bg-transparent italic outline-none placeholder:text-[#6d6d6d]" />
        </label>
      </div>
    </div>
  );
}

function StatusButton({ label, active, menu, children }: { label: string; active?: boolean; menu?: boolean; children: React.ReactNode }) {
  return (
    <button type="button" aria-label={label} className="flex h-6 items-center">
      <span className={clsx('flex h-6 w-6 items-center justify-center', active && 'bg-[#2f78b7]')}>
        <Icon size={17}><g stroke="#d8dade" strokeWidth="1.200">{children}</g></Icon>
      </span>
      {menu && <span className="flex w-4 justify-center"><Caret /></span>}
    </button>
  );
}

function StatusBar() {
  return (
    <footer className="flex h-8 items-start overflow-hidden pl-[19px] text-xs text-[#e8e8e8]">
      <div className="flex h-6 shrink-0 items-center whitespace-nowrap">
        <IconButton label="布局菜单"><Hamburger /></IconButton>
        <div className="ml-[10px] flex items-center gap-2">
          <Slash /><button type="button">模型</button><Slash /><button type="button">布局</button>
        </div>
        <button type="button" className="ml-2 h-6 bg-[#3b4453] px-4 font-semibold [clip-path:polygon(10px_0,100%_0,calc(100%-10px)_100%,0_100%)]">客厅餐厅AB立面图</button>
        <IconButton label="新建布局" className="mx-[10px]"><Plus /></IconButton>
        <Slash />
      </div>
      <div className="ml-[10px] mt-[2px] flex h-6 min-w-0 flex-1 items-center gap-[2px] whitespace-nowrap">
        <span className="flex h-6 items-center bg-[#3b4453] pr-1">【卓艺配置V10（树哥）】海龙V10卓艺1：30&lt;归层开&gt;</span>
        <span className="flex h-6 items-center bg-[#3b4453] px-[10px]">921.254, 112.635, 0.000</span>
        <div className="flex h-6 flex-1 items-center justify-between bg-[#3b4453] px-[2px]">
          <button type="button">图纸</button>
          <StatusButton label="推断约束"><path d="M9 1h5v6H9zM2 10h5v5H2z" fill="#d8dade" /><path d="M9 7v4H5" /></StatusButton>
          <StatusButton label="动态输入" active><path d="M4 1v6M1 4h6M6 9h9v5H6z" /></StatusButton>
          <StatusButton label="正交" active><path d="M2 1v13h13M2 9h5v5" /></StatusButton>
          <StatusButton label="极轴追踪" menu><circle cx="7" cy="9" r="5.500" /><path d="M7 9l7-7M7 9h8" /></StatusButton>
          <StatusButton label="等轴测草图" menu><path d="M3 2l11 12" /><path d="M8 1v14M2 11l5-3" stroke="#5fc47a" /></StatusButton>
          <StatusButton label="对象捕捉追踪" active><path d="M1 14L14 1M1 14h14" /></StatusButton>
          <StatusButton label="对象捕捉" active menu><path d="M3 3h11v11H3zM1 1h4v4H1z" /></StatusButton>
          <StatusButton label="线宽"><path d="M1 3h14M1 7h9M1 10h14M1 14h9" strokeWidth="2" /></StatusButton>
          <StatusButton label="透明度"><rect x="1" y="1" width="14" height="14" /><path d="M2 3h12M2 8h12M2 13h12" strokeWidth="2.500" strokeDasharray="2.500 2.200" /><path d="M4 5.500h9M4 10.500h9" strokeWidth="2.500" strokeDasharray="2.500 2.200" /></StatusButton>
          <StatusButton label="选择循环"><path d="M1 1h9v9H1z" strokeDasharray="2 1" /><path d="M5 5h10v10H5z" fill="#5fc47a" stroke="none" /></StatusButton>
          <StatusButton label="三维对象捕捉"><path d="M1 4V1h3M12 1h3v3M1 12v3h3M12 15h3v-3" /><path d="M4 5l4-1 4 2v6H5zM5 12l7-6" /></StatusButton>
          <StatusButton label="注释可见性"><path d="M7 3l3-2 2 2-2 4 4 7-6-4-6 5 4-7z" fill="#d8dade" /></StatusButton>
          <StatusButton label="自动缩放"><path d="M6 3l3-2 1 5 4 8-6-4-6 5 4-7zM11 4l3-3-1 4h2l-4 4" fill="#d8dade" /></StatusButton>
          <StatusButton label="切换工作空间" menu><circle cx="8" cy="8" r="4" strokeWidth="3" /><path d="M8 0v3M8 13v3M0 8h3M13 8h3M2.500 2.500l2 2M11.500 11.500l2 2M13.500 2.500l-2 2M2.500 13.500l2-2" strokeWidth="2.200" /></StatusButton>
          <StatusButton label="注释监视器"><path d="M8 1v14M1 8h14" strokeWidth="2" /></StatusButton>
          <StatusButton label="快捷特性"><rect x="3" y="1" width="11" height="14" /><path d="M5 4h7M5 8h7M5 12h7" strokeWidth="2" strokeDasharray="2 1 4" /></StatusButton>
          <StatusButton label="锁定用户界面" menu><path d="M1 2h12v9H1zM1 4h12" /><path d="M9 10h6v5H9z" fill="#d8dade" /></StatusButton>
          <StatusButton label="隔离对象"><circle cx="4" cy="4" r="3" /><path d="M9 2h5v5H9zM5 15l4-6 4 6z" /></StatusButton>
          <StatusButton label="图形性能" active><circle cx="8" cy="8" r="7" stroke="#a7c8e6" /><path d="M4 11l8-7" stroke="#a7c8e6" /></StatusButton>
          <StatusButton label="打印"><path d="M4 1h8v4H4zM1 5h14v7H1zM4 9h8v6H4z" /></StatusButton>
          <StatusButton label="数据链接"><path d="M1 2h6v6H1z" fill="#e8b84a" stroke="none" /><path d="M8 1h6v5H8z" fill="#3f8fd0" stroke="none" /><path d="M4 11l3 3 6-7" stroke="#5fc47a" strokeWidth="2" /></StatusButton>
          <StatusButton label="图像通知"><path d="M1 2h12v11H1zM2 12l4-6 3 4 2-2 4 6" fill="#d8dade" fillOpacity=".3" /></StatusButton>
          <StatusButton label="全屏显示"><path d="M1 2h14v12H1zM4 8V5h3M12 8v3H9" /></StatusButton>
          <StatusButton label="自定义"><path d="M1 3h14M1 8h14M1 13h14" strokeWidth="2" /></StatusButton>
        </div>
      </div>
    </footer>
  );
}

export default function App() {
  return (
    <div className={clsx('flex min-h-screen w-full flex-col border border-b-2 border-[#1296db] bg-[#222933]', UI_FONT)}>
      <TitleBar />
      <MenuBar />
      <FileTabs />
      <Toolbars />
      <main className="relative z-10 mx-[3px] min-h-[572px] flex-1 bg-[#8c8c8c]">
        <LayoutSheet />
        <OptionsDialog />
        <Callout />
      </main>
      <CommandLine />
      <StatusBar />
    </div>
  );
}
